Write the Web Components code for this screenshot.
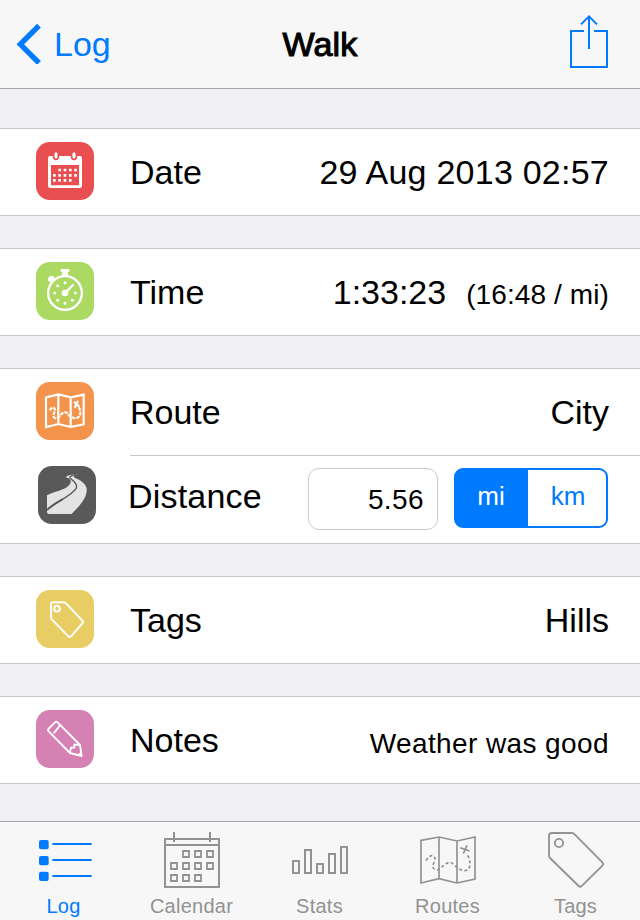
<!DOCTYPE html>
<html lang="en">
<head>
<meta charset="utf-8">
<title>Walk</title>
<style>
body{margin:0;width:640px;height:920px;overflow:hidden;background:#efeff4;font-family:"Liberation Sans",Arial,sans-serif;color:#000}
</style>
</head>
<body>
<walk-screen></walk-screen>
<script>
const define = (name, html) => customElements.define(name, class extends HTMLElement {
  constructor() {
    super();
    this.attachShadow({mode: "open"}).innerHTML = html;
  }
});

const icons = {
  date: ["48 51 174 174", `<path d="M91 93H180Q186 93 186 99V182Q186 189 179 189H91Q84 189 84 182V99Q84 93 91 93Z" fill="#fff"/><path d="M93 120H177V181H93Z" fill="#e94e50"/><g fill="#fff" stroke="#e94e50" stroke-width="5"><rect x="101" y="79" width="14" height="24" rx="7"/><rect x="155" y="79" width="14" height="24" rx="7"/></g><path d="M115 135H172M99 151H172M99 166H156" stroke="#fff" stroke-width="8" stroke-dasharray="8 7.9"/>`],
  time: ["48 411 174 174", `<g fill="none" stroke="#fff"><circle cx="135" cy="504" r="50.500" stroke-width="7"/><path d="M135 504L159 480" stroke-width="7" stroke-linecap="round"/><path d="M85 467L101 455" stroke-width="8"/></g><g fill="#fff"><path d="M122 432H148V441H144V453H126V441H122ZM84 463Q83 458 88 455Q93 450 98 455L104 461L92 472Z"/><circle cx="135" cy="504" r="10"/><circle cx="135" cy="473" r="4.500"/><circle cx="135" cy="535" r="4.500"/><circle cx="104" cy="504" r="4.500"/><circle cx="166" cy="504" r="4.500"/><circle cx="113" cy="482" r="4.500"/><circle cx="113" cy="526" r="4.500"/><circle cx="157" cy="526" r="4.500"/></g>`],
  route: ["48 51 174 174", `<g fill="none" stroke="#fff" stroke-width="6.500"><path d="M78 97L115 88L152 97L191 89V178L152 186L115 177L78 186ZM115 88V177M152 97V186"/><path d="M89 136C96 127 102 125 104 131C107 139 97 150 102 157C108 164 117 157 121 151C127 143 139 138 143 146C148 153 158 162 170 159C185 154 183 135 175 125" stroke-dasharray="11 3"/><path d="M162 110L178 125M174 107L164 128"/></g>`],
  road: ["54 303 174 174", `<path d="M137 337C141 331 152 329 174 327C163 330 157 334 164 338C176 343 196 353 200 370C203 400 174 427 155 447H86Q81 447 81 442V391C103 379 130 378 147 361C155 352 154 344 145 339Z" fill="#e3e3e3"/><path d="M82 435C108 410 153 394 168 371C177 355 153 345 150 338C148 333 157 331 168 329" fill="none" stroke="#595959" stroke-width="4"/><path d="M82 430C95 418 113 408 127 400L129 405C112 414 94 425 82 438Z" fill="#595959"/>`],
  tag: ["48 45 174 174", `<g fill="none" stroke="#fff" stroke-width="6" stroke-linejoin="round"><path d="M98 82H129Q135 82 139 86L187 137Q191 141 187 145L153 184Q149 188 145 184L96 134Q93 131 93 126V87Q93 82 98 82Z"/><circle cx="111" cy="101" r="8.500"/></g>`],
  note: ["48 405 174 174", `<g fill="none" stroke="#fff" stroke-width="5.500" stroke-linejoin="round"><path d="M86 461L105 442Q109 438 113 442L180 510L185 543L150 534L86 469Q82 465 86 461ZM101 475L120 451"/><path d="M150 532L153 518H163V508L179 511"/></g><path d="M185 544L170 541L183 530Z" fill="#fff"/>`],
  tabLog: ["0 126 384 210", `<g fill="currentColor"><rect x="117" y="180" width="29" height="28" rx="6"/><rect x="117" y="228" width="29" height="28" rx="6"/><rect x="117" y="275" width="29" height="28" rx="6"/><path d="M157 189h118v6h-118zM157 237h118v6h-118zM157 285h118v6h-118z"/></g>`],
  tabCalendar: ["384 126 384 210", `<g fill="none" stroke="currentColor" stroke-width="6"><path d="M495 177H657V321H495ZM495 195H657M522 156V186M630 156V186"/><path d="M549 213h18v18h-18zM585 213h18v18h-18zM621 213h18v18h-18zM513 249h18v18h-18zM549 249h18v18h-18zM585 249h18v18h-18zM621 249h18v18h-18zM513 285h18v18h-18zM549 285h18v18h-18zM585 285h18v18h-18z" stroke-width="5.500"/></g>`],
  tabStats: ["48 21 384 210", `<path d="M159 138h18v36h-18zM195 105h18v69h-18zM231 147h18v27h-18zM267 117h18v57h-18zM303 96h18v78h-18z" fill="none" stroke="currentColor" stroke-width="6"/>`],
  tabRoutes: ["-48 21 384 210", `<g fill="none" stroke="currentColor" stroke-width="5"><path d="M63 76L117 66L171 78L225 66V192L171 204L117 191L63 204ZM117 66V191M171 78V204"/><path d="M78 137C87 120 101 117 105 130C107 140 96 147 99 157C103 168 115 165 121 160C132 151 146 135 158 146C173 160 187 171 203 165C214 155 211 132 201 118" stroke-dasharray="9 7"/><path d="M181 98L209 108M201 91L190 116"/></g>`],
  tabTags: ["336 21 384 210", `<g fill="none" stroke="currentColor" stroke-width="5.500" stroke-linejoin="round"><path d="M456 54H515Q520 54 524 58L608 143Q611 147 608 151L544 214Q540 217 536 213L450 129Q447 126 447 121V63Q447 54 456 54Z"/><circle cx="477" cy="84" r="12.500"/></g>`]
};

customElements.define("app-icon", class extends HTMLElement {
  constructor() {
    super();
    const [box, art] = icons[this.getAttribute("name")];
    this.attachShadow({mode: "open"}).innerHTML =
      `<style>:host{display:block;flex:none;width:58px;height:58px}svg{display:block;width:100%;height:100%}</style><svg viewBox="${box}" aria-hidden="true">${art}</svg>`;
  }
});

define("nav-bar", `<style>
:host{display:grid;grid-template-columns:1fr auto 1fr;align-items:center;height:88px;background:#f7f7f7;border-bottom:1px solid #a7a7aa;font-size:34px;line-height:40px}
.back{display:flex;align-items:center;gap:13px;padding-left:16px;color:#007aff}
.title{-webkit-text-stroke:1.1px #000;letter-spacing:.2px}
.share{justify-self:end;padding:0 31px 4px 0}
svg{display:block}
</style>
<div class="back"><svg width="25" height="40" viewBox="48 72 75 120"><path d="M117 77L61 133L117 189" fill="none" stroke="#007aff" stroke-width="16"/></svg><slot name="back"></slot></div>
<div class="title"><slot></slot></div>
<div class="share"><svg width="40" height="56" viewBox="147 42 120 168"><path d="M192 93H153V201H261V93H222M207 147V50M183 73L207 49L231 73" fill="none" stroke="#007aff" stroke-width="6"/></svg></div>`);

define("row-group", `<style>
:host{display:block;background:#fff;border:solid #c8c7cc;border-width:1px 0}
</style><slot></slot>`);

define("detail-row", `<style>
:host{display:flex;align-items:center;height:86px;padding:0 31px 2px 36px;font-size:34px;line-height:40px;box-sizing:border-box}
.tile{display:block;width:58px;height:58px;border-radius:14px;background:var(--tile);overflow:hidden}
.label{margin-left:36px;flex:1;padding-top:2px}
.value{display:flex;align-items:baseline;padding-top:2px}
</style>
<div class="tile"><slot name="icon"></slot></div><div class="label"><slot name="label"></slot></div><div class="value"><slot></slot></div>`);

define("row-divider", `<style>:host{display:block;height:1px;margin-left:130px;background:#c8c7cc}</style>`);

define("small-text", `<style>:host{display:block;font-size:28px;line-height:30px}</style><slot></slot>`);

define("number-field", `<style>
:host{display:flex;justify-content:flex-end;align-items:center;box-sizing:border-box;width:130px;height:62px;border:1px solid #ccc;border-radius:11px;padding:1px 13px 0 0;font-size:28px;letter-spacing:.4px}
</style><slot></slot>`);

define("unit-switch", `<style>
:host{display:flex;box-sizing:border-box;width:154px;height:60px;border:2px solid #007aff;border-radius:9px;background:#007aff;font-size:26px;line-height:52px;color:#007aff;text-align:center}
.on{width:70px;padding-right:2px;color:#fff}
.off{flex:1;padding-left:2px;background:#fff;border-radius:0 7px 7px 0}
</style><div class="on"><slot name="on"></slot></div><div class="off"><slot name="off"></slot></div>`);

define("tab-bar", `<style>
:host{display:grid;grid-template-columns:repeat(5,128px);height:98px;border-top:1px solid #a7a7aa;background:#f7f7f7}
</style><slot></slot>`);

define("tab-item", `<style>
:host{display:flex;flex-direction:column;align-items:center;color:#929292;font-size:20px;line-height:24px;letter-spacing:.25px}
:host([active]){color:#007aff}
::slotted(app-icon){width:128px;height:70px}
.text{margin-top:2px;padding-right:1px}
</style><slot name="icon"></slot><div class="text"><slot></slot></div>`);

define("walk-screen", `<style>
:host{display:flex;flex-direction:column;width:640px;height:920px}
main{display:flex;flex-direction:column;gap:32px;padding-top:39px;flex:1}
.distance{height:87px;padding:0 32px 9px 38px}
.distance [slot=label]{margin-left:-4px;letter-spacing:.2px}
.controls{display:flex;gap:16px;align-items:flex-start;height:62px;margin-top:6px}
.stamp{letter-spacing:.24px}
.pace{margin-left:20px;letter-spacing:.1px}
.note{letter-spacing:.4px;padding-top:8px}
</style>
<nav-bar><span slot="back">Log</span>Walk</nav-bar>
<main>
<row-group><detail-row style="--tile:#e94e50"><app-icon slot="icon" name="date"></app-icon><span slot="label">Date</span><span class="stamp">29 Aug 2013 02:57</span></detail-row></row-group>
<row-group><detail-row style="--tile:#abd962"><app-icon slot="icon" name="time"></app-icon><span slot="label">Time</span><span>1:33:23</span><small-text class="pace">(16:48 / mi)</small-text></detail-row></row-group>
<row-group>
<detail-row style="--tile:#f4934c"><app-icon slot="icon" name="route"></app-icon><span slot="label">Route</span><span>City</span></detail-row>
<row-divider></row-divider>
<detail-row class="distance" style="--tile:#595959"><app-icon slot="icon" name="road"></app-icon><span slot="label">Distance</span><div class="controls"><number-field>5.56</number-field><unit-switch><span slot="on">mi</span><span slot="off">km</span></unit-switch></div></detail-row>
</row-group>
<row-group><detail-row style="--tile:#e8cd64"><app-icon slot="icon" name="tag"></app-icon><span slot="label">Tags</span><span>Hills</span></detail-row></row-group>
<row-group><detail-row style="--tile:#d681b4"><app-icon slot="icon" name="note"></app-icon><span slot="label">Notes</span><small-text class="note">Weather was good</small-text></detail-row></row-group>
</main>
<tab-bar>
<tab-item active><app-icon slot="icon" name="tabLog"></app-icon>Log</tab-item>
<tab-item><app-icon slot="icon" name="tabCalendar"></app-icon>Calendar</tab-item>
<tab-item><app-icon slot="icon" name="tabStats"></app-icon>Stats</tab-item>
<tab-item><app-icon slot="icon" name="tabRoutes"></app-icon>Routes</tab-item>
<tab-item><app-icon slot="icon" name="tabTags"></app-icon>Tags</tab-item>
</tab-bar>`);
</script>
</body>
</html>
